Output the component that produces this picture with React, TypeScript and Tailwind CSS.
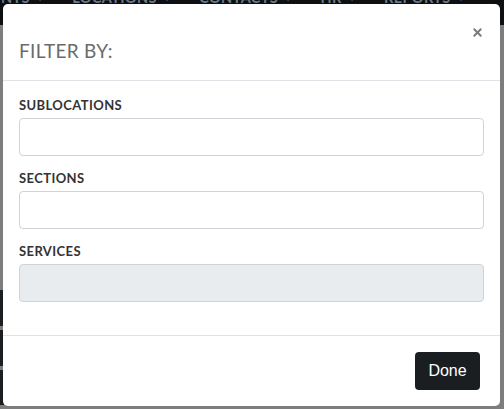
import React from 'react';
import { X } from 'lucide-react';

const NAV = ['NTS', 'LOCATIONS', 'CONTACTS', 'HR', 'REPORTS'];

const Field: React.FC<{ label: string; disabled?: boolean }> = ({ label, disabled }) => (
  <div className="flex flex-col">
    <label className="text-[13px] leading-[20px] font-bold tracking-[0.4px] text-[#333] mb-[3px]">{label}</label>
    <input
      disabled={disabled}
      className={`h-[38px] w-full rounded-[4px] border border-[#ced4da] px-3 outline-none ${
        disabled ? 'bg-[#e9ecef]' : 'bg-white'
      }`}
    />
  </div>
);

export default function App() {
  return (
    <div className="relative w-[504px] h-[409px] overflow-hidden bg-[#7d7d7d] font-['Lato','Liberation_Sans',sans-serif]">
      {/* backdrop: page behind the modal */}
      <div className="absolute inset-0 flex flex-col">
        <div className="h-[25px] bg-[#0d0f10] overflow-hidden">
          <div className="-mt-[11px] flex items-start gap-[30px] ml-[1px] text-[14.5px] leading-[18px] font-bold text-[#6a7b8c] tracking-wide whitespace-nowrap">
            {NAV.map((n) => (
              <span key={n} className="flex items-center">
                {n}
                <span className="text-[8px] ml-[8px]">▾</span>
              </span>
            ))}
          </div>
        </div>
        <div className="flex-1 flex">
          <div className="w-[4px] flex flex-col">
            <div className="h-[265px]" />
            <div className="flex-1 bg-[#1b1e21] flex flex-col">
              <div className="h-[36px]" />
              <div className="h-[4px] bg-[#7d7d7d]" />
              <div className="h-[36px]" />
              <div className="h-[4px] bg-[#7d7d7d]" />
            </div>
            <div className="h-[4px]" />
          </div>
        </div>
      </div>

      {/* modal */}
      <div className="absolute left-[3px] top-[4px] w-[497px] h-[402px] bg-white rounded-[5px] flex flex-col">
        <div className="h-[77px] border-b border-[#dee2e6] flex items-start justify-between pl-[16px] pr-[16px]">
          <h5 className="mt-[35px] text-[19px] leading-[24px] text-[#6b6b6b] tracking-[0.3px]">FILTER BY:</h5>
          <button className="mt-[22px] text-[#7a7a7a]">
            <X size={13} strokeWidth={3.5} />
          </button>
        </div>
        <div className="px-[16px] pt-[14px] flex flex-col gap-[12px]">
          <Field label="SUBLOCATIONS" />
          <Field label="SECTIONS" />
          <Field label="SERVICES" disabled />
        </div>
        <div className="mt-auto h-[71px] border-t border-[#dee2e6] flex items-start justify-end pr-[20px] pt-[16px]">
          <button className="h-[38px] w-[65px] rounded-[4px] bg-[#1b1e21] text-white text-[16px] font-['Liberation_Sans',sans-serif]">
            Done
          </button>
        </div>
      </div>
    </div>
  );
}
